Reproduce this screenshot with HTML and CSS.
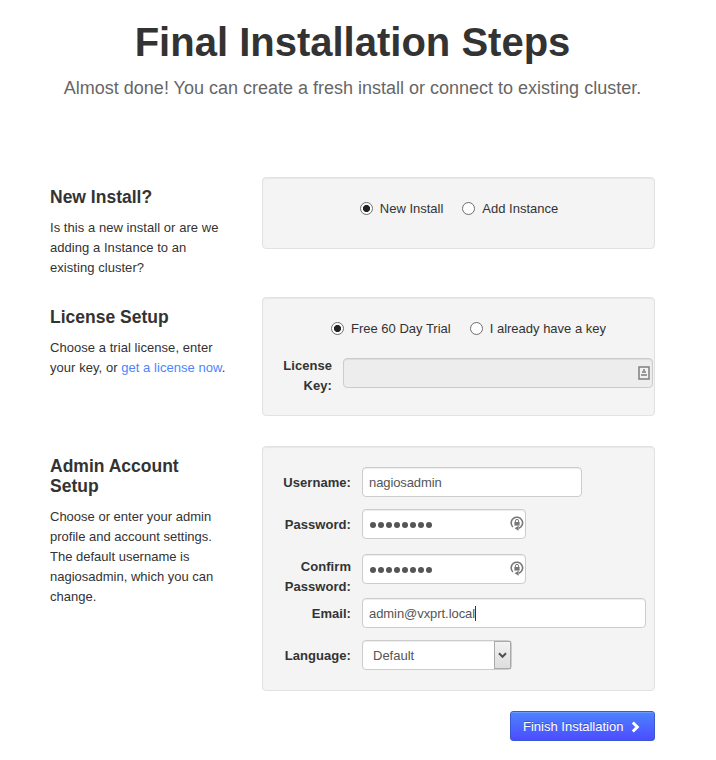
FILE: index.html
```html
<!DOCTYPE html>
<html lang="en">
<head>
<meta charset="utf-8">
<title>Final Installation Steps</title>
<link rel="stylesheet" href="styles.css">
</head>
<body>
<main class="page">
  <header class="hero">
    <h1>Final Installation Steps</h1>
    <p class="lead">Almost done! You can create a fresh install or connect to existing cluster.</p>
  </header>

  <section class="step step-install">
    <div class="info">
      <h2>New Install?</h2>
      <p>Is this a new install or are we<br>adding a Instance to an<br>existing cluster?</p>
    </div>
    <div class="well">
      <div class="choices">
        <label class="choice"><i class="radio on"></i><span>New Install</span></label>
        <label class="choice"><i class="radio"></i><span>Add Instance</span></label>
      </div>
    </div>
  </section>

  <section class="step step-license">
    <div class="info">
      <h2>License Setup</h2>
      <p>Choose a trial license, enter<br>your key, or <a>get a license now</a>.</p>
    </div>
    <div class="well">
      <div class="choices">
        <label class="choice"><i class="radio on"></i><span>Free 60 Day Trial</span></label>
        <label class="choice"><i class="radio"></i><span>I already have a key</span></label>
      </div>
      <div class="key-row">
        <label class="label">License<br>Key:</label>
        <div class="field key">
          <svg class="key-icon" width="12" height="14" viewBox="0 0 12 14"><rect x="1" y="1" width="10" height="12" fill="#f2f2f2" stroke="#858585" stroke-width="1.6"/><path d="M5 3h2v2h1v2H4V5h1zM3 8h6v2H3z" fill="#999"/></svg>
        </div>
      </div>
    </div>
  </section>

  <section class="step step-account">
    <div class="info">
      <h2>Admin Account<br>Setup</h2>
      <p>Choose or enter your admin<br>profile and account settings.<br>The default username is<br>nagiosadmin, which you can<br>change.</p>
    </div>
    <div class="well form">
      <div class="row row-user"><label class="label">Username:</label><div class="field user"><span>nagiosadmin</span></div></div>
      <div class="row row-pass"><label class="label">Password:</label><div class="field pass">
        <span class="dots"><i></i><i></i><i></i><i></i><i></i><i></i><i></i><i></i></span>
        <svg class="lock" width="14" height="15" viewBox="0 0 14 15"><path d="M2.9 11A5.7 5.7 0 1 1 9 12.2" fill="none" stroke="#777" stroke-width="1.6"/><path d="M8.6 9.8v5L4.6 12.3z" fill="#777"/><path d="M5.4 6.5V5a1.6 1.6 0 0 1 3.2 0v1.5" fill="none" stroke="#777"/><rect x="4.4" y="6" width="5.2" height="3.6" fill="#777"/></svg>
      </div></div>
      <div class="row row-confirm"><label class="label">Confirm<br>Password:</label><div class="field pass">
        <span class="dots"><i></i><i></i><i></i><i></i><i></i><i></i><i></i><i></i></span>
        <svg class="lock" width="14" height="15" viewBox="0 0 14 15"><path d="M2.9 11A5.7 5.7 0 1 1 9 12.2" fill="none" stroke="#777" stroke-width="1.6"/><path d="M8.6 9.8v5L4.6 12.3z" fill="#777"/><path d="M5.4 6.5V5a1.6 1.6 0 0 1 3.2 0v1.5" fill="none" stroke="#777"/><rect x="4.4" y="6" width="5.2" height="3.6" fill="#777"/></svg>
      </div></div>
      <div class="row row-email"><label class="label">Email:</label><div class="field email"><span>admin@vxprt.local</span><i class="caret"></i></div></div>
      <div class="row row-lang"><label class="label">Language:</label><div class="field select"><span>Default</span>
        <b class="drop"><svg width="9" height="7" viewBox="0 0 9 7"><path d="M1 1.2 4.5 4.8 8 1.2" fill="none" stroke="#505050" stroke-width="2"/></svg></b>
      </div></div>
    </div>
  </section>

  <div class="actions">
    <button class="finish"><span>Finish Installation</span><svg width="9" height="12" viewBox="0 0 9 12"><path d="M1.8 1.5 6.3 6 1.8 10.5" fill="none" stroke="#fff" stroke-width="3"/></svg></button>
  </div>
</main>
</body>
</html>
```
FILE: styles.css
```css
* { box-sizing: border-box; }
body { margin: 0; background: #fff; color: #333; font: 13px/20px "Liberation Sans", Arial, sans-serif; }
h1, h2, p { margin: 0; }
.page { width: 605px; margin-left: 50px; }
.hero { height: 177px; padding-top: 22px; text-align: center; white-space: nowrap; }
.hero h1 { font-size: 40px; line-height: 40px; }
.lead { margin-top: 16px; font-size: 18px; line-height: 20px; color: #666; }
.step { display: grid; grid-template-columns: 212px 393px; align-items: start; }
.step-install { height: 120px; }
.step-license { height: 149px; }
.info { padding-top: 10px; white-space: nowrap; }
.info h2 { font-size: 17.5px; line-height: 20px; margin-bottom: 11px; }
.info p { letter-spacing: 0.05px; }
.step-account .info p { letter-spacing: 0; }
.info a { color: #4c84ff; }
.well { background: #f4f4f4; border: 1px solid #e2e2e2; border-radius: 4px; box-shadow: inset 0 1px 1px rgba(0,0,0,.05); padding: 20px 0; }
.step-install .well { height: 72px; }
.step-license .well { height: 119px; }
.step-account .well { height: 245px; }
.choices { display: flex; justify-content: center; gap: 19px; height: 20px; white-space: nowrap; }
.step-install .choices { padding-left: 1px; }
.step-license .choices { padding-left: 20px; }
.choice { display: flex; align-items: center; gap: 7px; }
.choice span, .field span, .finish span { padding-top: 2px; }
.radio { width: 13px; height: 13px; border: 1px solid #6e6e6e; border-radius: 50%; background: #fff; }
.radio.on { background: radial-gradient(circle, #222 3.2px, #fff 3.9px); }
.key-row { display: flex; gap: 11px; margin-top: 20px; }
.label { font-weight: bold; text-align: right; white-space: nowrap; letter-spacing: 0.05px; }
.key-row .label { width: 69px; margin-top: -2px; }
.field { display: flex; align-items: center; height: 30px; border: 1px solid #ccc; border-radius: 4px; background: #fff; color: #555; padding: 0 6px; box-shadow: inset 0 1px 1px rgba(0,0,0,.075); }
.key { width: 310px; background: #ededed; justify-content: flex-end; padding-right: 2px; }
.form { display: flex; flex-direction: column; }
.row { display: flex; gap: 11px; }
.row .label { width: 88px; padding-top: 6px; }
.row-user, .row-email { height: 42px; }
.row-pass { height: 45px; }
.row-confirm { height: 44px; }
.row-confirm .label { padding-top: 3px; }
.user { width: 220px; }
.user span { letter-spacing: -0.1px; }
.pass { width: 164px; justify-content: space-between; padding-right: 1px; }
.email { width: 284px; }
.email span { letter-spacing: -0.06px; }
.field .dots { display: flex; gap: 2px; padding: 1px 0 0 1px; }
.dots i { width: 6px; height: 6px; border-radius: 50%; background: #555; }
.lock { margin-top: -2px; }
.caret { width: 1px; height: 15px; background: #333; }
.select { width: 150px; padding: 0 0 0 10px; justify-content: space-between; }
.drop { width: 17px; height: 28px; display: flex; align-items: center; justify-content: center; background: linear-gradient(#f2f2f2, #ddd); border: 1px solid #aaa; }
.actions { display: flex; justify-content: flex-end; margin-top: 20px; }
.finish { width: 145px; height: 30px; padding: 0 0 0 12px; display: flex; align-items: center; gap: 8px; border: 1px solid #3d57cf; border-radius: 3px; background: linear-gradient(#4c84ff, #4c4cff); color: #fff; font: inherit; white-space: nowrap; text-shadow: 0 -1px 0 rgba(0,0,0,.25); box-shadow: inset 0 1px 0 rgba(255,255,255,.2); }
.finish svg { margin-top: 2px; }
```
